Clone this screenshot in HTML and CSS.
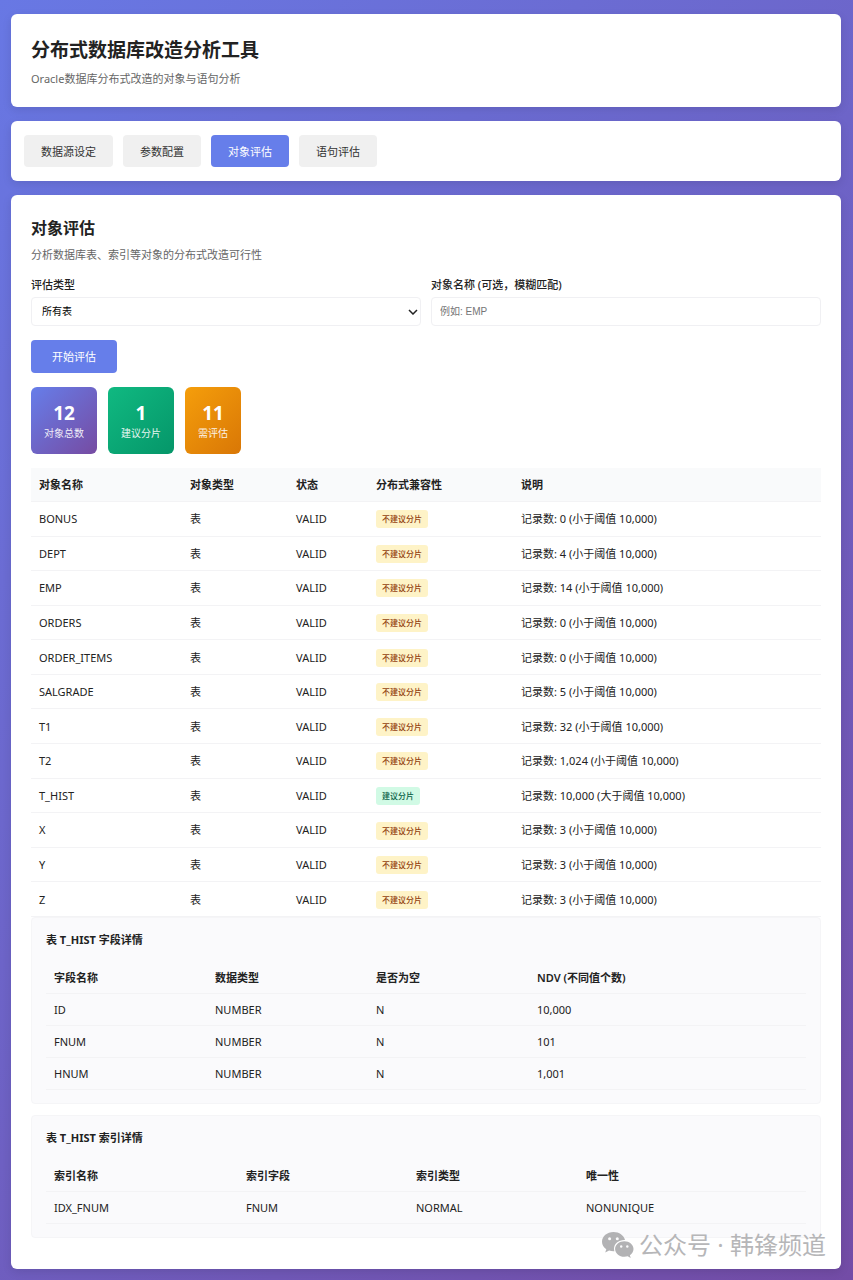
FILE: index.html
```html
<!DOCTYPE html>
<html lang="zh-CN">
<head>
    <meta charset="UTF-8">
    <meta name="viewport" content="width=device-width, initial-scale=1.0">
    <title>分布式数据库改造分析工具</title>
    <link rel="stylesheet" href="styles.css">
</head>
<body>
    <header class="card header">
        <h1>分布式数据库改造分析工具</h1>
        <p class="subtitle">Oracle数据库分布式改造的对象与语句分析</p>
    </header>

    <nav class="card tabs">
        <button type="button" class="tab">数据源设定</button>
        <button type="button" class="tab">参数配置</button>
        <button type="button" class="tab active">对象评估</button>
        <button type="button" class="tab">语句评估</button>
    </nav>

    <main class="card content">
        <h2>对象评估</h2>
        <p class="subtitle">分析数据库表、索引等对象的分布式改造可行性</p>

        <form class="form">
            <div class="form-row">
                <div class="form-group">
                    <label for="objectType">评估类型</label>
                    <div class="select-wrap">
                        <select id="objectType">
                            <option>所有表</option>
                        </select>
                        <svg class="chevron" width="10" height="6" viewBox="0 0 10 6" aria-hidden="true">
                            <path d="M1 1l4 4 4-4" fill="none" stroke="#222" stroke-width="1.500"/>
                        </svg>
                    </div>
                </div>
                <div class="form-group">
                    <label for="objectName">对象名称 (可选，模糊匹配)</label>
                    <input type="text" id="objectName" placeholder="例如: EMP">
                </div>
            </div>
            <button type="button" class="btn">开始评估</button>
        </form>

        <div class="stats">
            <div class="stat total">
                <div class="stat-value">12</div>
                <div class="stat-label">对象总数</div>
            </div>
            <div class="stat good">
                <div class="stat-value">1</div>
                <div class="stat-label">建议分片</div>
            </div>
            <div class="stat warn">
                <div class="stat-value">11</div>
                <div class="stat-label">需评估</div>
            </div>
        </div>

        <table class="objects">
            <thead>
                <tr><th class="col-name">对象名称</th><th class="col-type">对象类型</th><th class="col-status">状态</th><th class="col-compat">分布式兼容性</th><th>说明</th></tr>
            </thead>
            <tbody>
                <tr><td>BONUS</td><td>表</td><td>VALID</td><td><span class="badge no">不建议分片</span></td><td>记录数: 0 (小于阈值 10,000)</td></tr>
                <tr><td>DEPT</td><td>表</td><td>VALID</td><td><span class="badge no">不建议分片</span></td><td>记录数: 4 (小于阈值 10,000)</td></tr>
                <tr><td>EMP</td><td>表</td><td>VALID</td><td><span class="badge no">不建议分片</span></td><td>记录数: 14 (小于阈值 10,000)</td></tr>
                <tr><td>ORDERS</td><td>表</td><td>VALID</td><td><span class="badge no">不建议分片</span></td><td>记录数: 0 (小于阈值 10,000)</td></tr>
                <tr><td>ORDER_ITEMS</td><td>表</td><td>VALID</td><td><span class="badge no">不建议分片</span></td><td>记录数: 0 (小于阈值 10,000)</td></tr>
                <tr><td>SALGRADE</td><td>表</td><td>VALID</td><td><span class="badge no">不建议分片</span></td><td>记录数: 5 (小于阈值 10,000)</td></tr>
                <tr><td>T1</td><td>表</td><td>VALID</td><td><span class="badge no">不建议分片</span></td><td>记录数: 32 (小于阈值 10,000)</td></tr>
                <tr><td>T2</td><td>表</td><td>VALID</td><td><span class="badge no">不建议分片</span></td><td>记录数: 1,024 (小于阈值 10,000)</td></tr>
                <tr><td>T_HIST</td><td>表</td><td>VALID</td><td><span class="badge yes">建议分片</span></td><td>记录数: 10,000 (大于阈值 10,000)</td></tr>
                <tr><td>X</td><td>表</td><td>VALID</td><td><span class="badge no">不建议分片</span></td><td>记录数: 3 (小于阈值 10,000)</td></tr>
                <tr><td>Y</td><td>表</td><td>VALID</td><td><span class="badge no">不建议分片</span></td><td>记录数: 3 (小于阈值 10,000)</td></tr>
                <tr><td>Z</td><td>表</td><td>VALID</td><td><span class="badge no">不建议分片</span></td><td>记录数: 3 (小于阈值 10,000)</td></tr>
            </tbody>
        </table>

        <section class="detail">
            <h3>表 T_HIST 字段详情</h3>
            <table class="fields">
                <thead>
                    <tr><th>字段名称</th><th>数据类型</th><th>是否为空</th><th>NDV (不同值个数)</th></tr>
                </thead>
                <tbody>
                    <tr><td>ID</td><td>NUMBER</td><td>N</td><td>10,000</td></tr>
                    <tr><td>FNUM</td><td>NUMBER</td><td>N</td><td>101</td></tr>
                    <tr><td>HNUM</td><td>NUMBER</td><td>N</td><td>1,001</td></tr>
                </tbody>
            </table>
        </section>

        <section class="detail">
            <h3>表 T_HIST 索引详情</h3>
            <table class="indexes">
                <thead>
                    <tr><th>索引名称</th><th>索引字段</th><th>索引类型</th><th>唯一性</th></tr>
                </thead>
                <tbody>
                    <tr><td>IDX_FNUM</td><td>FNUM</td><td>NORMAL</td><td>NONUNIQUE</td></tr>
                </tbody>
            </table>
        </section>
    </main>

    <div class="watermark">
        <svg width="32" height="26" viewBox="0 0 32 26" aria-hidden="true">
            <path fill="#b2b2b4" d="M11.500 0C5.100 0 0 4.300 0 9.700c0 3 1.700 5.700 4.300 7.500l-1.100 3.300 3.900-1.900c1.400.4 2.900.6 4.400.6h.9a8.300 8.300 0 0 1-.4-2.400c0-4.900 4.600-8.800 10.300-8.800h.7C21.900 3.400 17.200 0 11.500 0z"/>
            <path fill="#b2b2b4" d="M31.500 17c0-4.300-4.100-7.800-9.200-7.800s-9.200 3.500-9.200 7.800 4.100 7.800 9.200 7.800c1.200 0 2.300-.2 3.400-.5l3 1.600-.8-2.700c2.200-1.400 3.600-3.700 3.600-6.200z"/>
            <g fill="#fafafb">
                <circle cx="7.600" cy="6.800" r="1.500"/>
                <circle cx="15.300" cy="6.800" r="1.500"/>
                <circle cx="19.200" cy="14.500" r="1.200"/>
                <circle cx="25.300" cy="14.500" r="1.200"/>
            </g>
        </svg>
        <span>公众号 · 韩锋频道</span>
    </div>
</body>
</html>
```
FILE: styles.css
```css
* {
    margin: 0;
    padding: 0;
    box-sizing: border-box;
}

body {
    position: relative;
    min-height: 100vh;
    padding: 14px 12px 11px 11px;
    display: flex;
    flex-direction: column;
    gap: 14px;
    font-family: "Noto Sans", "Noto Sans CJK SC", sans-serif;
    font-size: 11px;
    line-height: 17px;
    color: #222;
    background: linear-gradient(135deg, #6878e4 0%, #734ca6 100%);
}

.card {
    background-color: white;
    border-radius: 6px;
    box-shadow: 0 3px 10px rgba(0, 0, 0, 0.1);
}

.header {
    padding: 21px 20px 20px;
}

h1 {
    font-size: 19px;
    line-height: 31px;
    margin-bottom: 4px;
}

.subtitle {
    color: #666;
}

.tabs {
    display: flex;
    gap: 10px;
    padding: 14px 13px;
}

.tab {
    padding: 0 17px;
    height: 32px;
    border: none;
    border-radius: 4px;
    background-color: #f0f0f0;
    color: #333;
    font: inherit;
    cursor: pointer;
}

.tab.active {
    background-color: #667eea;
    color: white;
}

.content {
    flex: 1;
    padding: 20px 20px 30px;
}

h2 {
    font-size: 16px;
    line-height: 27px;
    margin-bottom: 4px;
}

.form {
    margin: 13px 0 14px;
}

.form-row {
    display: grid;
    grid-template-columns: 1fr 1fr;
    gap: 10px;
    margin-bottom: 14px;
}

.form-group {
    display: flex;
    flex-direction: column;
    gap: 4px;
}

label {
    font-weight: 500;
}

select,
input {
    display: block;
    width: 100%;
    height: 29px;
    border: 1px solid #f0f0f3;
    border-radius: 4px;
    background-color: white;
    font-family: "Liberation Sans", "Noto Sans CJK SC", sans-serif;
    font-size: 10px;
}

select {
    appearance: none;
    padding: 0 10px;
    color: #000;
}

.select-wrap {
    position: relative;
}

.chevron {
    position: absolute;
    right: 3px;
    top: 12px;
    pointer-events: none;
}

input {
    padding: 0 8px;
}

.btn {
    height: 33px;
    padding: 0 21px;
    border: none;
    border-radius: 4px;
    background-color: #667eea;
    color: white;
    font: inherit;
    cursor: pointer;
}

.stats {
    display: flex;
    gap: 11px;
    margin-bottom: 14px;
}

.stat {
    padding: 14px 13px;
    border-radius: 6px;
    color: white;
    text-align: center;
}

.stat.total {
    background: linear-gradient(135deg, #667eea, #764ba2);
}

.stat.good {
    background: linear-gradient(135deg, #10b981, #059669);
}

.stat.warn {
    background: linear-gradient(135deg, #f59e0b, #d97706);
}

.stat-value {
    font-size: 19px;
    font-weight: bold;
    line-height: 25px;
}

.stat-label {
    font-size: 10px;
    line-height: 14px;
    opacity: 0.9;
}

table {
    width: 100%;
    border-collapse: collapse;
}

th,
td {
    padding: 7px 8px;
    border-bottom: 1px solid #f3f3f5;
    text-align: left;
}

th {
    font-weight: 600;
}

.objects {
    height: 449px;
}

.objects th {
    padding: 8px;
    background-color: #f9fafb;
}

.col-name {
    width: 151px;
}

.col-type {
    width: 106px;
}

.col-status {
    width: 80px;
}

.col-compat {
    width: 145px;
}

.badge {
    display: inline-block;
    padding: 0 6px;
    border-radius: 3px;
    font-size: 8px;
    line-height: 18px;
    font-weight: 500;
    vertical-align: middle;
}

.badge.no {
    background-color: #fef3c7;
    color: #92400e;
}

.badge.yes {
    background-color: #d1fae5;
    color: #065f46;
}

.detail {
    padding: 13px 14px;
    border: 1px solid #f5f5f7;
    border-radius: 4px;
    background-color: #fafafc;
}

.detail + .detail {
    margin-top: 11px;
}

.detail h3 {
    font-size: 11px;
    margin-bottom: 14px;
}

.fields th:not(:last-child) {
    width: 161px;
}

.indexes th:not(:last-child) {
    width: 170px;
}

.indexes th:first-child {
    width: 192px;
}

.indexes th:first-child:not(:last-child) {
    width: 192px;
}

.watermark {
    position: absolute;
    right: 27px;
    bottom: 20px;
    display: flex;
    align-items: center;
    gap: 5px;
    color: #b6b6b8;
    font-size: 24px;
    line-height: 30px;
}
```
